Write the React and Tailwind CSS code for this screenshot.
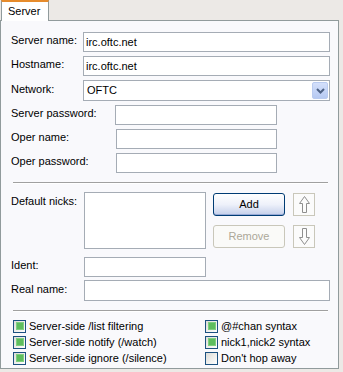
import { useState } from 'react';

const font = { fontFamily: '"Liberation Sans", Arial, sans-serif' };

const TextBox = ({ value = '', className = '' }) => (
  <div className={`h-[20px] border border-[#a5acb5] bg-white px-[2px] flex items-center text-black ${className}`}>
    {value}
  </div>
);

const Label = ({ children, className = '' }) => (
  <span className={`text-[11px] text-black pb-[3px] ${className}`}>{children}</span>
);

const Arrow = ({ down }) => (
  <svg width="11" height="17" viewBox="0 0 11 17" className={down ? 'rotate-180' : ''}>
    <path d="M5.5 0.5 L10.5 7.5 L7.5 7.5 L7.5 16.5 L3.5 16.5 L3.5 7.5 L0.5 7.5 Z" fill="#fbfbfb" stroke="#8e8e8e" strokeWidth="1" />
  </svg>
);

const CheckBox = ({ checked, label, onToggle }) => (
  <label className="flex items-center h-[16px] gap-[3px] cursor-default" onClick={onToggle}>
    <span className="w-[13px] h-[13px] border border-[#1c5180] bg-gradient-to-br from-[#dcdcd7] to-[#ffffff] flex items-center justify-center">
      {checked && <span className="w-[8px] h-[8px] bg-[#5ebd5e] border border-[#7fcf7f]" />}
    </span>
    <span className="text-[11px] text-black">{label}</span>
  </label>
);

export default function App() {
  const [checks, setChecks] = useState({
    list: true,
    notify: true,
    ignore: true,
    chan: true,
    nick: true,
    hop: false
  });

  const toggle = (key) => setChecks((c) => ({ ...c, [key]: !c[key] }));

  return (
    <div className="w-[343px] h-[372px] bg-[#ece9e6] text-[11px] leading-none" style={font}>
      <div className="relative z-10 ml-[1px] -mb-px w-[48px] h-[21px] bg-white border-x border-[#919b9c] border-t-[2px] border-t-[#e68b2c] flex items-center pl-[6px] text-[11px] text-black">
        Server
      </div>
      <div className="w-[339px] h-[349px] border border-[#919b9c] bg-[#f9f9fc] pl-[10px] pr-[8px] pt-[11px]">
        <div className="flex flex-col gap-[4px]">
          <div className="flex items-center">
            <Label className="w-[72px]">Server name:</Label>
            <TextBox value="irc.oftc.net" className="w-[247px]" />
          </div>
          <div className="flex items-center">
            <Label className="w-[72px]">Hostname:</Label>
            <TextBox value="irc.oftc.net" className="w-[247px]" />
          </div>
          <div className="flex items-center">
            <Label className="w-[72px]">Network:</Label>
            <div className="w-[247px] h-[21px] border border-[#a5acb5] bg-white flex items-center justify-between pl-[3px] pr-px">
              <span>OFTC</span>
              <span className="w-[16px] h-[17px] rounded-[2px] border border-[#b9cbf0] bg-gradient-to-b from-[#d4e0fb] to-[#b6c9f2] flex items-center justify-center">
                <svg width="9" height="6" viewBox="0 0 9 6">
                  <path d="M1 1 L4.5 4.5 L8 1" fill="none" stroke="#4d6185" strokeWidth="2" />
                </svg>
              </span>
            </div>
          </div>
          <div className="flex items-center">
            <Label className="w-[104px]">Server password:</Label>
            <TextBox className="w-[162px]" />
          </div>
          <div className="flex items-center">
            <Label className="w-[105px]">Oper name:</Label>
            <TextBox className="w-[161px]" />
          </div>
          <div className="flex items-center">
            <Label className="w-[105px]">Oper password:</Label>
            <TextBox className="w-[161px]" />
          </div>
        </div>

        <div className="mt-[9px] mr-[2px] ml-[2px] h-[2px] border-t border-[#a0a0a0] border-b border-b-white" />

        <div className="mt-[8px] flex items-start">
          <Label className="w-[73px] pt-[4px]">Default nicks:</Label>
          <div className="w-[122px] h-[57px] border border-[#a5acb5] bg-white" />
          <div className="ml-[7px] flex flex-col gap-[9px] pt-px">
            <div className="flex gap-[8px]">
              <button className="w-[72px] h-[23px] rounded-[3px] border border-[#003c74] bg-gradient-to-b from-[#ffffff] via-[#eef1fa] to-[#c4cfea] text-[11px] text-black shadow-[inset_0_-1px_0_#97a9d6]">
                Add
              </button>
              <span className="w-[22px] h-[23px] border border-[#c9c7ba] bg-[#fbfbfb] flex items-center justify-center">
                <Arrow />
              </span>
            </div>
            <div className="flex gap-[8px]">
              <button disabled className="w-[72px] h-[23px] rounded-[3px] border border-[#c9c7ba] bg-[#fafaf8] text-[11px] text-[#aca899]">
                Remove
              </button>
              <span className="w-[22px] h-[23px] border border-[#c9c7ba] bg-[#fbfbfb] flex items-center justify-center">
                <Arrow down />
              </span>
            </div>
          </div>
        </div>

        <div className="mt-[8px] flex flex-col gap-[3px]">
          <div className="flex items-center">
            <Label className="w-[73px]">Ident:</Label>
            <TextBox className="w-[122px]" />
          </div>
          <div className="flex items-center">
            <Label className="w-[73px]">Real name:</Label>
            <TextBox className="w-[246px] h-[21px]" />
          </div>
        </div>

        <div className="mt-[9px] mr-[2px] ml-[2px] h-[2px] border-t border-[#a0a0a0] border-b border-b-white" />

        <div className="mt-[6px] ml-[2px] flex">
          <div className="w-[192px] flex flex-col">
            <CheckBox checked={checks.list} label="Server-side /list filtering" onToggle={() => toggle('list')} />
            <CheckBox checked={checks.notify} label="Server-side notify (/watch)" onToggle={() => toggle('notify')} />
            <CheckBox checked={checks.ignore} label="Server-side ignore (/silence)" onToggle={() => toggle('ignore')} />
          </div>
          <div className="flex flex-col">
            <CheckBox checked={checks.chan} label="@#chan syntax" onToggle={() => toggle('chan')} />
            <CheckBox checked={checks.nick} label="nick1,nick2 syntax" onToggle={() => toggle('nick')} />
            <CheckBox checked={checks.hop} label="Don't hop away" onToggle={() => toggle('hop')} />
          </div>
        </div>
      </div>
    </div>
  );
}
